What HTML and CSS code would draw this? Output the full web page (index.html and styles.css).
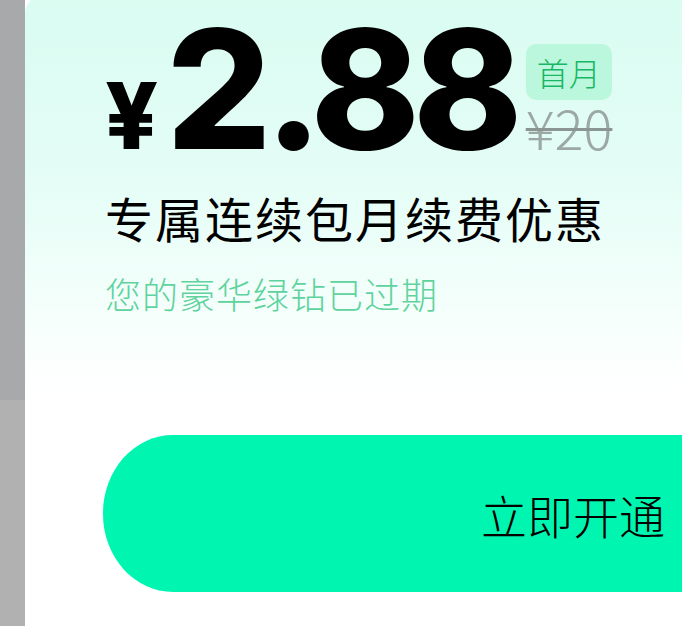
FILE: index.html
```html
<!DOCTYPE html>
<html lang="zh-CN">
<head>
<meta charset="utf-8">
<title>绿钻续费</title>
<link rel="stylesheet" href="styles.css">
</head>
<body>
<div class="screen">
  <div class="side">
    <div class="side-top"></div>
    <div class="side-bottom"></div>
  </div>
  <div class="card">
    <div class="price-row">
      <span class="yen">¥</span>
      <span class="amount">2.88</span>
      <div class="tag-col">
        <span class="tag">首月</span>
        <span class="orig">¥20</span>
      </div>
    </div>
    <h1 class="title">专属连续包月续费优惠</h1>
    <p class="sub">您的豪华绿钻已过期</p>
    <button class="cta">立即开通</button>
  </div>
</div>
</body>
</html>
```
FILE: styles.css
```css
html, body {
  margin: 0;
  padding: 0;
  width: 682px;
  height: 626px;
  overflow: hidden;
  background: #ffffff;
}
.screen {
  display: flex;
  width: 682px;
  height: 626px;
  overflow: hidden;
}
.side {
  width: 25px;
  flex: none;
  display: flex;
  flex-direction: column;
}
.side-top {
  height: 400px;
  background: #a7a9aa;
}
.side-bottom {
  flex: 1;
  background: #b1b1b1;
}
.card {
  flex: 1;
  margin-top: -7px;
  height: 633px;
  border-top-left-radius: 22px;
  background: linear-gradient(180deg, #d9fcf1 0px, #e4fdf6 180px, #f6fffc 330px, #ffffff 400px);
  padding-left: 80px;
  overflow: hidden;
  display: flex;
  flex-direction: column;
  align-items: flex-start;
  font-family: "Noto Sans CJK SC", "Noto Sans", sans-serif;
}
.price-row {
  display: flex;
  align-items: flex-start;
  margin-top: 14px;
}
.yen {
  font-family: "Inter", "Roboto", sans-serif;
  font-weight: 800;
  font-size: 92px;
  line-height: 1;
  color: #000;
  margin-top: 63px;
}
.amount {
  font-family: "Inter", "Roboto", sans-serif;
  font-weight: 800;
  font-size: 165px;
  line-height: 1;
  letter-spacing: -7px;
  padding-right: 7px;
  color: #000;
  margin-left: 8px;
}
.tag-col {
  display: flex;
  flex-direction: column;
  align-items: flex-start;
  margin-left: 3px;
  margin-top: 37px;
}
.tag {
  display: flex;
  align-items: center;
  justify-content: center;
  width: 86px;
  height: 56px;
  border-radius: 10px;
  background: #baf7dd;
  color: #17b865;
  font-size: 32px;
  font-weight: 300;
  line-height: 1;
}
.orig {
  font-size: 54px;
  font-weight: 300;
  line-height: 1;
  color: #9ba8a4;
  text-decoration: line-through;
  text-decoration-color: #8b9692;
  text-decoration-thickness: 3px;
}
.title {
  margin: 21px 0 0 0;
  font-size: 48px;
  font-weight: 400;
  line-height: 1;
  color: #000;
  letter-spacing: 2px;
}
.sub {
  margin: 34px 0 0 0;
  font-size: 36px;
  font-weight: 300;
  line-height: 1;
  color: #5fd39e;
  letter-spacing: 1px;
}
.cta {
  margin: 124px 0 0 -2px;
  width: 940px;
  flex: none;
  height: 157px;
  border: none;
  border-radius: 70px 0 0 70px / 78px 0 0 78px;
  background: #00f5b0;
  color: #000;
  font-family: "Noto Sans CJK SC", "Noto Sans", sans-serif;
  font-size: 46px;
  font-weight: 300;
  line-height: 1;
  display: flex;
  align-items: center;
  justify-content: center;
  padding: 0;
}
```
